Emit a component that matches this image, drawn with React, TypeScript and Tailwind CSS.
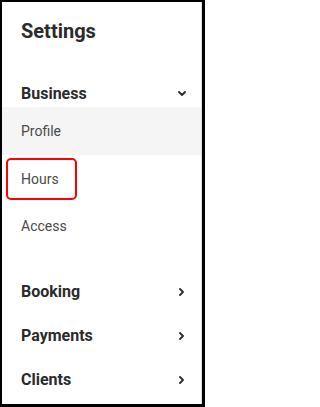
const SUB_ITEMS = ["Profile", "Hours", "Access"];
const SECTIONS = ["Booking", "Payments", "Clients"];

function ChevronDown() {
  return (
    <svg width="8" height="5" viewBox="0 0 8 5" fill="none" aria-hidden="true">
      <path d="M1 1l3 3 3-3" stroke="#2b2b2b" strokeWidth="1.8" strokeLinecap="round" strokeLinejoin="round" />
    </svg>
  );
}

function ChevronRight() {
  return (
    <svg width="5" height="8" viewBox="0 0 5 8" fill="none" aria-hidden="true">
      <path d="M1 1l3 3-3 3" stroke="#2b2b2b" strokeWidth="1.8" strokeLinecap="round" strokeLinejoin="round" />
    </svg>
  );
}

export default function App() {
  return (
    <div
      className="h-[407px] w-[205px] border-t-2 border-l-2 border-r-[3px] border-b-[3px] border-black bg-white"
      style={{ fontFamily: "Roboto, 'Liberation Sans', sans-serif" }}
    >
      <div className="flex h-full flex-col border-r border-[#dcdcdc]">
        <h1 className="pl-[19px] pt-[17px] text-[20px] font-bold leading-[24px] text-[#2b2b2b]">
          Settings
        </h1>

        {/* Business (expanded) */}
        <div className="mt-[37px] flex h-[27px] items-center justify-between pl-[19px] pr-[15px]">
          <span className="text-[16px] font-bold leading-[20px] text-[#2b2b2b]">Business</span>
          <ChevronDown />
        </div>
        <ul>
          {SUB_ITEMS.map((item, idx) => (
            <li
              key={item}
              className={`flex items-center ${idx === 0 ? "h-[48px] bg-[#f5f5f5]" : "h-[47px]"}`}
            >
              {item === "Hours" ? (
                <div className="ml-[4px] flex h-[42px] w-[71px] items-center rounded-[5px] border-2 border-[#ff0000] pl-[13px]">
                  <span className="text-[14px] leading-[20px] text-[#4a4a4a]">{item}</span>
                </div>
              ) : (
                <span className="pl-[19px] text-[14px] leading-[20px] text-[#4a4a4a]">{item}</span>
              )}
            </li>
          ))}
        </ul>

        <ul className="mt-[21px]">
          {SECTIONS.map((s) => (
            <li key={s} className="flex h-[44px] items-center justify-between pl-[19px] pr-[17px]">
              <span className="text-[16px] font-bold leading-[20px] text-[#2b2b2b]">{s}</span>
              <ChevronRight />
            </li>
          ))}
        </ul>
      </div>
    </div>
  );
}
